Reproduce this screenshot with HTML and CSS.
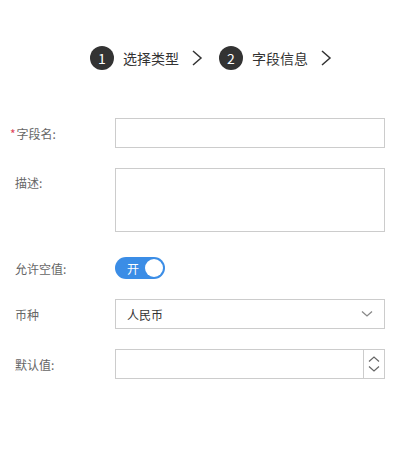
FILE: index.html
```html
<!DOCTYPE html>
<html>
<head>
    <title>字段信息</title>
    <link rel="stylesheet" href="styles.css">
</head>
<body>
    <div class="steps">
        <div class="step">
            <span class="num">1</span>
            <span class="step-text">选择类型</span>
            <svg class="arrow" width="12" height="16" viewBox="0 0 12 16"><path d="M2 1 L10 8 L2 15" fill="none" stroke="#333" stroke-width="1.5"/></svg>
        </div>
        <div class="step">
            <span class="num">2</span>
            <span class="step-text">字段信息</span>
            <svg class="arrow" width="12" height="16" viewBox="0 0 12 16"><path d="M2 1 L10 8 L2 15" fill="none" stroke="#333" stroke-width="1.5"/></svg>
        </div>
    </div>

    <form class="form">
        <div class="row">
            <label class="label"><span class="req">*</span>字段名:</label>
            <input type="text" class="input">
        </div>
        <div class="row top">
            <label class="label">描述:</label>
            <textarea class="textarea"></textarea>
        </div>
        <div class="row switch-row">
            <label class="label">允许空值:</label>
            <div class="switch">
                <span class="switch-text">开</span>
                <span class="knob"></span>
            </div>
        </div>
        <div class="row">
            <label class="label">币种</label>
            <div class="select">
                <span>人民币</span>
                <svg width="12" height="8" viewBox="0 0 12 8"><path d="M1 1.5 L6 6 L11 1.5" fill="none" stroke="#888" stroke-width="1.3"/></svg>
            </div>
        </div>
        <div class="row">
            <label class="label">默认值:</label>
            <div class="number">
                <input type="text" class="number-input">
                <div class="spin">
                    <svg width="12" height="8" viewBox="0 0 12 8"><path d="M1 6.5 L6 2 L11 6.5" fill="none" stroke="#666" stroke-width="1.2"/></svg>
                    <svg width="12" height="8" viewBox="0 0 12 8"><path d="M1 1.5 L6 6 L11 1.5" fill="none" stroke="#666" stroke-width="1.2"/></svg>
                </div>
            </div>
        </div>
    </form>
</body>
</html>
```

FILE: styles.css
```css
body {
    margin: 0;
    font-family: "Noto Sans CJK SC", "Noto Sans", sans-serif;
    color: #333;
    background: #fff;
}
.steps {
    display: flex;
    justify-content: center;
    gap: 16px;
    padding-top: 46px;
    padding-left: 22px;
    height: 24px;
}
.step {
    display: flex;
    align-items: center;
    height: 24px;
}
.num {
    width: 24px;
    height: 24px;
    border-radius: 50%;
    background: #333;
    color: #fff;
    font-size: 14px;
    line-height: 24px;
    text-align: center;
}
.step-text {
    font-size: 14px;
    margin-left: 9px;
    margin-right: 12px;
}
.form {
    margin-top: 48px;
    padding: 0 15px 0 10px;
}
.row {
    display: flex;
    align-items: center;
    margin-bottom: 20px;
}
.row.top {
    align-items: flex-start;
}
.row.top .label {
    line-height: 30px;
}
.label {
    width: 105px;
    flex: none;
    font-size: 12px;
    color: #666;
    padding-left: 5px;
    box-sizing: border-box;
}
.req {
    color: #e0455a;
    margin-left: -5px;
    margin-right: 1px;
}
.input, .textarea, .select, .number {
    flex: 1;
    height: 30px;
    border: 1px solid #ccc;
    box-sizing: border-box;
    margin: 0;
    font-family: inherit;
}
.textarea {
    height: 64px;
    resize: none;
}
.switch-row {
    padding-top: 5px;
    margin-bottom: 20px;
    height: 22px;
}
.switch {
    width: 50px;
    height: 22px;
    border-radius: 11px;
    background: #3b8de6;
    display: flex;
    align-items: center;
    justify-content: space-between;
    padding: 0 2px 0 12px;
    box-sizing: border-box;
}
.switch-text {
    color: #fff;
    font-size: 12px;
}
.knob {
    width: 18px;
    height: 18px;
    border-radius: 50%;
    background: #fff;
}
.select {
    display: flex;
    align-items: center;
    justify-content: space-between;
    padding: 0 11px;
    font-size: 12px;
    color: #333;
}
.number {
    display: flex;
}
.number-input {
    flex: 1;
    border: none;
    min-width: 0;
}
.spin {
    width: 20px;
    border-left: 1px solid #ccc;
    display: flex;
    flex-direction: column;
    align-items: center;
    justify-content: center;
    gap: 2px;
}
```
